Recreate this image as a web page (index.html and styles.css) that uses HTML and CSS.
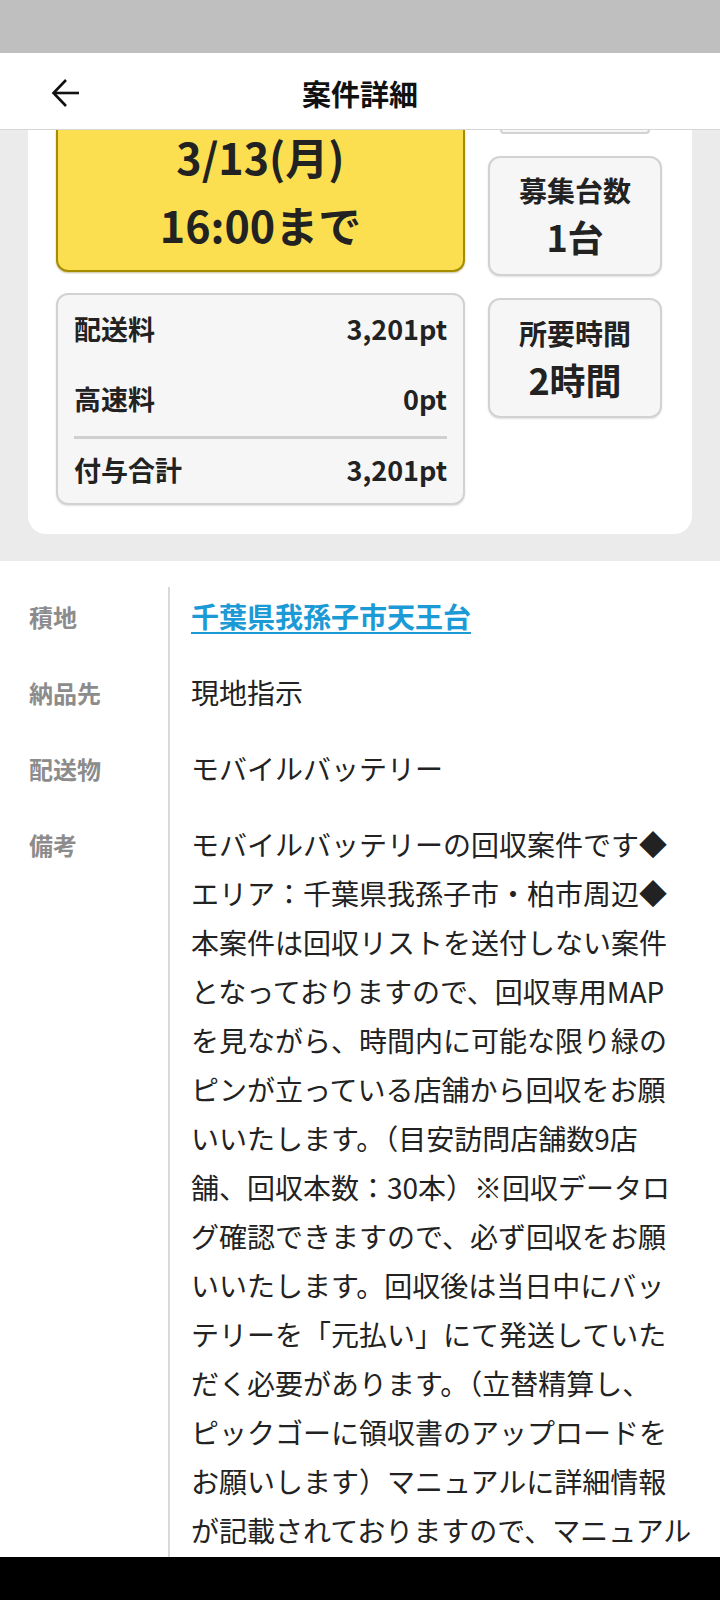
FILE: index.html
```html
<!DOCTYPE html>
<html lang="ja">
<head>
<meta charset="utf-8">
<title>案件詳細</title>
<link rel="stylesheet" href="styles.css">
</head>
<body>
<div class="screen">
  <div class="statusbar"></div>
  <header class="appbar">
    <button class="back" aria-label="戻る">
      <svg width="30" height="30" viewBox="0 0 30 30" fill="none" stroke="#111" stroke-width="2.6" stroke-linecap="butt" stroke-linejoin="miter">
        <path d="M3 15H28"/>
        <path d="M15 2L2.5 15L15 28"/>
      </svg>
    </button>
    <h1 class="title">案件詳細</h1>
    <span></span>
  </header>
  <main class="content">
    <section class="summary">
      <div class="card">
        <div class="col-left">
          <div class="deadline">
            <p>3/13(月)</p>
            <p>16:00まで</p>
          </div>
          <div class="fees">
            <div class="fee-row"><span>配送料</span><span>3,201pt</span></div>
            <div class="fee-row"><span>高速料</span><span>0pt</span></div>
            <div class="fee-divider"></div>
            <div class="fee-row"><span>付与合計</span><span>3,201pt</span></div>
          </div>
        </div>
        <div class="col-right">
          <div class="stat-clipped"></div>
          <div class="stat">
            <span class="stat-label">募集台数</span>
            <span class="stat-value">1台</span>
          </div>
          <div class="stat">
            <span class="stat-label">所要時間</span>
            <span class="stat-value">2時間</span>
          </div>
        </div>
      </div>
    </section>
    <section class="details">
      <div class="label">積地</div>
      <div class="value"><a class="link" href="#">千葉県我孫子市天王台</a></div>
      <div class="label">納品先</div>
      <div class="value">現地指示</div>
      <div class="label">配送物</div>
      <div class="value">モバイルバッテリー</div>
      <div class="label">備考</div>
      <div class="value note">モバイルバッテリーの回収案件です◆<br>エリア：千葉県我孫子市・柏市周辺◆<br>本案件は回収リストを送付しない案件<br>となっておりますので、回収専用MAP<br>を見ながら、時間内に可能な限り緑の<br>ピンが立っている店舗から回収をお願<br>いいたします。（目安訪問店舗数9店<br>舗、回収本数：30本）※回収データロ<br>グ確認できますので、必ず回収をお願<br>いいたします。回収後は当日中にバッ<br>テリーを「元払い」にて発送していた<br>だく必要があります。（立替精算し、<br>ピックゴーに領収書のアップロードを<br>お願いします）マニュアルに詳細情報<br>が記載されておりますので、マニュアル</div>
    </section>
  </main>
  <div class="navbar"></div>
</div>
</body>
</html>
```

FILE: styles.css
```css
* { box-sizing: border-box; }

html, body {
  margin: 0;
  padding: 0;
  background: #ffffff;
}

body {
  font-family: "Noto Sans CJK JP", "Noto Sans", sans-serif;
  color: #222222;
}

.screen {
  width: 720px;
  height: 1600px;
  display: flex;
  flex-direction: column;
  overflow: hidden;
}

.statusbar {
  height: 53px;
  flex: none;
  background: #bfbfbf;
}

.appbar {
  height: 77px;
  flex: none;
  display: grid;
  grid-template-columns: 1fr auto 1fr;
  align-items: center;
  background: #ffffff;
  border-bottom: 1px solid #d6d6d6;
}

.back {
  justify-self: start;
  margin-left: 51px;
  margin-top: 4px;
  padding: 0;
  border: 0;
  background: none;
  display: flex;
}

.title {
  margin: 4px 0 0;
  font-size: 29px;
  font-weight: 700;
  line-height: 40px;
  color: #111111;
}

.content {
  flex: 1;
  overflow: hidden;
}

.summary {
  background: #ebebeb;
  padding: 0 28px 27px;
}

.card {
  background: #ffffff;
  border-radius: 0 0 18px 18px;
  padding: 0 28px 29px;
  display: grid;
  grid-template-columns: 409px 174px;
  column-gap: 23px;
  align-items: start;
}

.col-left {
  display: flex;
  flex-direction: column;
  gap: 21px;
}

.deadline {
  background: #fbdf51;
  border: 2px solid #a68d00;
  border-top: 0;
  border-radius: 0 0 12px 12px;
  box-shadow: 0 1px 2px rgba(120, 100, 0, 0.4);
  padding: 2px 0 22px;
  text-align: center;
  color: #222222;
}

.deadline p {
  margin: 0;
  font-size: 43px;
  font-weight: 700;
  line-height: 48px;
}

.deadline p + p {
  margin-top: 20px;
}

.fees {
  background: #f6f6f6;
  border: 2px solid #d2d2d2;
  border-radius: 12px;
  box-shadow: 0 1px 2px rgba(0, 0, 0, 0.12);
  padding: 14px 16px 13px;
}

.fee-row {
  display: flex;
  justify-content: space-between;
  font-size: 27px;
  font-weight: 700;
  line-height: 40px;
}

.fee-row + .fee-row {
  margin-top: 30px;
}

.fee-divider {
  height: 3px;
  background: #d0d0d0;
  margin: 17px 0 11px;
}

.col-right {
  display: flex;
  flex-direction: column;
  gap: 22px;
}

.stat-clipped {
  height: 4px;
  background: #f6f6f6;
  border: 2px solid #d2d2d2;
  border-top: 0;
  border-radius: 0 0 10px 10px;
  margin: 0 12px;
}

.stat {
  height: 120px;
  background: #f6f6f6;
  border: 2px solid #d2d2d2;
  border-radius: 12px;
  box-shadow: 0 1px 2px rgba(0, 0, 0, 0.12);
  display: flex;
  flex-direction: column;
  align-items: center;
  padding-top: 14px;
  color: #222222;
}

.stat + .stat {
  padding-top: 15px;
}

.stat-label {
  font-size: 28px;
  font-weight: 700;
  line-height: 36px;
}

.stat-value {
  margin-top: 6px;
  font-size: 36px;
  font-weight: 700;
  line-height: 44px;
}

.details {
  padding-top: 26px;
  display: grid;
  grid-template-columns: 168px 1fr;
}

.label {
  padding: 5px 0 22px 29px;
  font-size: 24px;
  font-weight: 700;
  line-height: 49px;
  color: #8c8c8c;
}

.value {
  border-left: 2px solid #d9d9d9;
  padding: 5px 0 22px 21px;
  font-size: 28px;
  line-height: 49px;
  color: #222222;
  white-space: nowrap;
}

.link {
  color: #1b9ad6;
  font-weight: 700;
  text-decoration: underline;
  text-decoration-thickness: 2px;
  text-underline-offset: 4px;
}

.navbar {
  height: 43px;
  flex: none;
  background: #000000;
}
```
